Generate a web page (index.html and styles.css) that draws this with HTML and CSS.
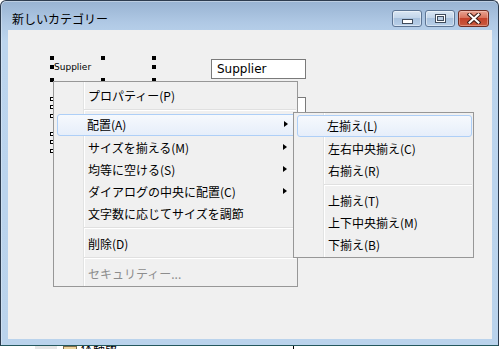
FILE: index.html
```html
<!DOCTYPE html>
<html lang="ja">
    <head>
        <meta charset="utf-8" />
        <title>新しいカテゴリー</title>
        <link rel="stylesheet" href="styles.css">
    </head>

    <body>
        <div class="window">
            <div class="titlebar">
                <div class="title">新しいカテゴリー</div>
                <div class="caption-buttons">
                    <div class="cap-btn"><span class="min-icon"></span></div>
                    <div class="cap-btn"><span class="max-icon"></span></div>
                    <div class="cap-btn close">
                        <svg width="14" height="11" viewBox="0 0 14 11">
                            <path d="M2.5 1.5 L11.5 9.5 M11.5 1.5 L2.5 9.5" stroke="#43201a" stroke-width="4.2" stroke-linecap="square" fill="none"/>
                            <path d="M2.5 1.5 L11.5 9.5 M11.5 1.5 L2.5 9.5" stroke="#ffffff" stroke-width="2" stroke-linecap="square" fill="none"/>
                        </svg>
                    </div>
                </div>
            </div>

            <div class="client">
                <!-- selected label -->
                <span class="handle" style="left:42px; top:26px"></span>
                <span class="handle" style="left:93px; top:26px"></span>
                <span class="handle" style="left:144px; top:26px"></span>
                <span class="handle" style="left:42px; top:35px"></span>
                <span class="handle" style="left:144px; top:35px"></span>
                <span class="handle" style="left:42px; top:48px"></span>
                <span class="handle" style="left:93px; top:48px"></span>
                <span class="handle" style="left:144px; top:48px"></span>
                <div class="label">Supplier</div>

                <!-- other selected controls -->
                <span class="handle hollow" style="left:42px; top:67px"></span>
                <span class="handle hollow" style="left:42px; top:75px"></span>
                <span class="handle hollow" style="left:42px; top:84px"></span>
                <span class="handle hollow" style="left:42px; top:102px"></span>
                <span class="handle hollow" style="left:42px; top:110px"></span>
                <span class="handle hollow" style="left:42px; top:119px"></span>

                <div class="textbox tb1">Supplier</div>
                <div class="textbox tb2"></div>

                <div class="menu main-menu">
                    <div class="item">プロパティー(P)</div>
                    <div class="sep"></div>
                    <div class="item hot">配置(A)<span class="arrow"></span></div>
                    <div class="item">サイズを揃える(M)<span class="arrow"></span></div>
                    <div class="item">均等に空ける(S)<span class="arrow"></span></div>
                    <div class="item">ダイアログの中央に配置(C)<span class="arrow"></span></div>
                    <div class="item">文字数に応じてサイズを調節</div>
                    <div class="sep"></div>
                    <div class="item">削除(D)</div>
                    <div class="sep"></div>
                    <div class="item disabled">セキュリティー...</div>
                </div>

                <div class="menu sub-menu">
                    <div class="item hot">左揃え(L)</div>
                    <div class="item">左右中央揃え(C)</div>
                    <div class="item">右揃え(R)</div>
                    <div class="sep"></div>
                    <div class="item">上揃え(T)</div>
                    <div class="item">上下中央揃え(M)</div>
                    <div class="item">下揃え(B)</div>
                </div>
            </div>
        </div>

        <div class="desk">
            <span class="desk-gray"></span>
            <span class="desk-icon"></span>
            <span class="desk-text">体験版</span>
            <span class="desk-line"></span>
        </div>
    </body>
</html>
```

FILE: styles.css
```css
html, body {
    margin: 0;
    padding: 0;
    background: #ffffff;
    overflow: hidden;
}
body {
    width: 500px;
    height: 349px;
    font-family: "Noto Sans CJK JP", "DejaVu Sans", sans-serif;
    font-size: 12px;
    color: #000;
}
.window {
    width: 499px;
    height: 346px;
    box-sizing: border-box;
    border: 1px solid #2d3c4f;
    border-bottom-color: #24585e;
    border-radius: 6px 6px 0 0;
    background: linear-gradient(#98b3d2 0, #b0c9e5 22px, #bcd5ee 40px, #bad3ec 100%);
    display: flex;
    flex-direction: column;
    box-shadow: inset 0 1px 0 rgba(255, 255, 255, 0.35), inset 1px 0 0 rgba(255, 255, 255, 0.3);
}
.titlebar {
    height: 29px;
    display: flex;
    align-items: flex-start;
    justify-content: space-between;
    padding: 9px 9px 0 11px;
    box-sizing: border-box;
}
.title {
    line-height: 17px;
    font-size: 12px;
    color: #000;
}
.caption-buttons {
    display: flex;
    gap: 3px;
}
.cap-btn {
    width: 30px;
    height: 17px;
    box-sizing: border-box;
    border: 1px solid #5d7594;
    border-radius: 3px;
    background: linear-gradient(#d9e6f3 0, #c3d6ea 45%, #a9c2de 50%, #b8cfe8 100%);
    box-shadow: inset 0 0 0 1px rgba(255, 255, 255, 0.45);
    display: flex;
    align-items: center;
    justify-content: center;
}
.cap-btn.close {
    width: 31px;
    border-color: #6e2d24;
    background: linear-gradient(#e8a493 0, #d9725c 45%, #c4422b 50%, #c85a3f 100%);
    box-shadow: inset 0 0 0 1px rgba(255, 220, 210, 0.4);
}
.cap-btn.close svg {
    display: block;
}
.min-icon {
    width: 11px;
    height: 5px;
    box-sizing: border-box;
    border: 1px solid #3f4b5b;
    background: #ffffff;
    margin-top: 6px;
}
.max-icon {
    width: 11px;
    height: 9px;
    box-sizing: border-box;
    border: 1px solid #3f4b5b;
    box-shadow: inset 0 0 0 1px #ffffff, inset 0 0 0 2px #3f4b5b;
    background: #b9cde3;
}
.client {
    position: relative;
    flex: 1;
    margin: 0 6px 6px 7px;
    background: #f0f0f0;
    overflow: hidden;
}
.handle {
    position: absolute;
    width: 4px;
    height: 4px;
    background: #000;
}
.handle.hollow {
    box-sizing: border-box;
    border: 1px solid #000;
    background: #fff;
}
.label {
    position: absolute;
    left: 46px;
    top: 32px;
    font-family: "DejaVu Sans", sans-serif;
    font-size: 9px;
    line-height: 11px;
}
.textbox {
    position: absolute;
    left: 203px;
    width: 95px;
    height: 20px;
    box-sizing: border-box;
    border: 1px solid #7a7a7a;
    background: #ffffff;
    font-family: "DejaVu Sans", sans-serif;
    font-size: 12px;
    line-height: 18px;
    padding-left: 5px;
}
.tb1 {
    top: 29px;
}
.tb2 {
    top: 67px;
}

/* context menus */
.menu {
    position: absolute;
    box-sizing: border-box;
    border: 1px solid #979797;
    padding: 2px 1px 2px 3px;
    background:
        linear-gradient(to right, transparent 29px, #e2e3e3 29px, #e2e3e3 30px, #ffffff 30px, #ffffff 31px, transparent 31px),
        #f0f0f0;
}
.main-menu {
    left: 45px;
    top: 51px;
    width: 245px;
}
.sub-menu {
    left: 285px;
    top: 82px;
    width: 181px;
}
.item {
    position: relative;
    height: 22px;
    line-height: 21px;
    padding-left: 30px;
    box-sizing: border-box;
    white-space: nowrap;
    border: 1px solid transparent;
    border-radius: 3px;
}
.item.hot {
    border-color: #aecff7;
    background: linear-gradient(#f6f9fd, #e6eefa);
    padding-left: 29px;
    line-height: 19px;
}
.item.disabled {
    color: #8d8d8d;
}
.arrow {
    position: absolute;
    right: 8px;
    top: 7px;
    width: 0;
    height: 0;
    border-top: 3.5px solid transparent;
    border-bottom: 3.5px solid transparent;
    border-left: 4px solid #000;
}
.item.hot .arrow {
    top: 6px;
    right: 7px;
}
.sep {
    height: 8px;
    position: relative;
}
.sep::after {
    content: "";
    position: absolute;
    left: 27px;
    right: 0;
    top: 3px;
    height: 1px;
    background: #e0e0e0;
    border-bottom: 1px solid #ffffff;
}

/* desktop strip below window */
.desk {
    height: 3px;
    display: flex;
    align-items: flex-start;
    background: #ffffff;
}
.desk-gray {
    width: 22px;
    height: 3px;
    margin-left: 35px;
    background: #e6e6e6;
}
.desk-icon {
    width: 14px;
    height: 3px;
    margin-left: 6px;
    box-sizing: border-box;
    border: 1px solid #7a6a4a;
    border-bottom: 0;
    background: #ecd39c;
}
.desk-text {
    margin-left: 4px;
    font-size: 12px;
    line-height: 3px;
    height: 3px;
    overflow: hidden;
    width: 40px;
}
.desk-line {
    width: 1px;
    height: 3px;
    margin-left: 172px;
    background: #000;
}
```
